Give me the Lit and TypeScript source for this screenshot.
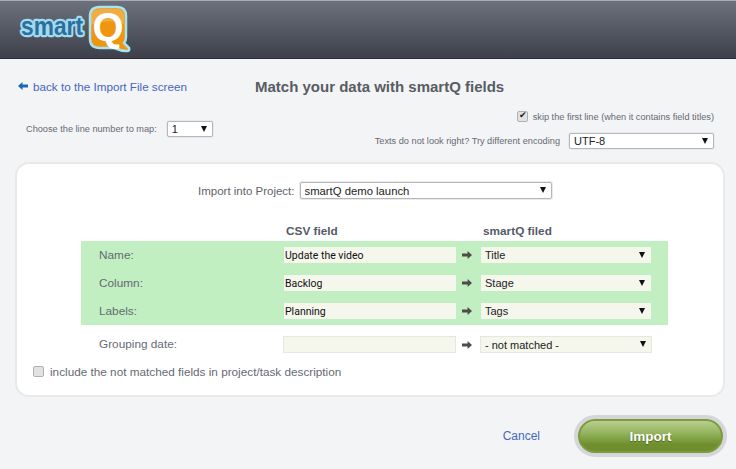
import { LitElement, html, css, svg } from "lit";
import { customElement } from "lit/decorators.js";

const arrow = svg`<svg class="field-arrow" width="10" height="8" viewBox="0 0 10 8"><path d="M0 2.4h5.6V0L10 4 5.6 8V5.6H0z" fill="#4f4b49"/></svg>`;

@customElement("app-root")
export class AppRoot extends LitElement {
  static styles = css`
    :host { display: block; width: 736px; height: 469px; overflow: hidden; background: #f3f4f6; font-family: "Liberation Sans", Arial, sans-serif; color: #666a73; }
    * { box-sizing: border-box; }
    header { height: 59px; padding: 7px 0 0 20px; background: linear-gradient(#6d717b, #3d404a); border-top: 1px solid #a9abb0; border-bottom: 1px solid #2c2e34; }
    header svg { display: block; margin-top: -1px; overflow: visible; }
    .logo-smart { font: bold 25px "Liberation Sans", Arial, sans-serif; fill: #2f6d9e; stroke: #9fdcef; stroke-width: 4.5px; paint-order: stroke; stroke-linejoin: round; }
    .logo-q { font: bold 40px "Liberation Sans", Arial, sans-serif; fill: #fff; }
    .top { display: flex; align-items: center; height: 20px; margin-top: 17px; padding-left: 18px; }
    .back { display: flex; align-items: center; gap: 5px; width: 237px; font-size: 11.7px; color: #4767c0; text-decoration: none; }
    h1 { margin: 0; font-size: 15px; font-weight: bold; color: #585c63; }
    .options { display: flex; justify-content: space-between; align-items: flex-start; padding: 15px 22px 0 26px; height: 66px; }
    .line-map { display: flex; align-items: center; gap: 10px; margin-top: 10px; font-size: 9.2px; }
    .right { display: flex; flex-direction: column; align-items: flex-end; gap: 11px; font-size: 9.2px; }
    .right-row { display: flex; align-items: center; }
    .sel { position: relative; display: block; height: 16px; }
    .sel select { appearance: none; display: block; width: 100%; height: 100%; margin: 0; padding: 0 0 0 4px; border: 1px solid #b4b6b9; border-radius: 2px; background: #fff; color: #222; font: 11px "Liberation Sans", Arial, sans-serif; box-shadow: 0 0 0 1px #e9eaec; }
    .sel::after { content: ""; position: absolute; right: 6px; top: 5px; border-left: 3px solid transparent; border-right: 3px solid transparent; border-top: 6px solid #111; pointer-events: none; }
    .sel-line { width: 46px; }
    .sel-enc { width: 145px; margin-left: 9px; }
    .sel-project { width: 252px; height: 17px; margin-left: 5px; }
    .sel-project select { font-size: 11.3px; }
    .check { appearance: none; display: block; width: 11px; height: 11px; margin: 0 5px 0 0; border: 1px solid #b0b1b3; border-radius: 2px; background: #e2e2e4; position: relative; }
    .check:checked::after { content: "✔"; position: absolute; left: 1px; top: -2px; font-size: 9px; color: #222; }
    .card { margin: 0 11px 0 15px; height: 235px; padding-top: 18px; background: #fff; border: 2px solid #e8e9eb; border-radius: 14px; }
    .project { display: flex; justify-content: flex-start; align-items: center; padding-left: 181px; height: 17px; font-size: 11.5px; color: #5f636b; }
    .heads { display: flex; margin-top: 25px; height: 17px; padding-left: 269px; font-size: 11.8px; font-weight: bold; color: #555a66; }
    .heads span:first-child { width: 197px; }
    .mapped { margin: 0 55px 0 64px; padding: 6px 0; background: #c1efc1; display: flex; flex-direction: column; gap: 12px; }
    .row { display: flex; align-items: center; height: 16px; padding-left: 18px; font-size: 11.8px; color: #666a73; }
    .row .name { width: 185px; margin-top: -1px; }
    .input { display: block; width: 172px; height: 16px; padding: 0 0 0 1px; border: 0; background: #f5f6ec; color: #111; font: 10.5px Roboto, sans-serif; outline: none; }
    .field-arrow { margin: 0 9px 0 6px; flex: none; }
    .sel-field { width: 170px; margin-left: 0; }
    .sel-field select { border: 0; background: #f5f6ec; box-shadow: none; border-radius: 0; }
    .group { margin: 11px 0 0 64px; height: 17px; }
    .group .row { height: 17px; }
    .group .input, .group .sel-field select { border: 1px solid #e6e7e0; }
    .group .input { height: 17px; width: 173px; margin-left: -1px; }
    .group .sel { height: 17px; width: 172px; margin-left: -1px; }
    .include { display: flex; align-items: center; margin: 8px 0 0 16px; font-size: 11.75px; color: #666a73; height: 20px; }
    .include .check { margin-right: 6px; }
    .actions { display: flex; justify-content: flex-end; align-items: center; margin-top: 18px; padding-right: 9px; }
    .cancel { font-size: 12px; color: #4767c0; text-decoration: none; margin-right: 34px; }
    .import { width: 153px; height: 42px; padding: 0; border: 4px solid #d5d6d9; border-radius: 21px; background: linear-gradient(#bdd497 0%, #95b560 40%, #6f8f2e 75%, #6f8f2e 100%); box-shadow: inset 0 0 0 2px #7d9a3c; color: #fff; font: bold 13.5px "Liberation Sans", Arial, sans-serif; text-shadow: 0 1px 1px #4c5f1e; }
  `;

  private field(name: string, value: string, target: string) {
    return html`<div class="row"><span class="name">${name}</span><input class="input" .value=${value} aria-label=${name} />${arrow}<span class="sel sel-field"><select aria-label="smartQ field"><option>${target}</option></select></span></div>`;
  }

  render() {
    return html`
      <header>
        <svg width="115" height="46" viewBox="0 0 115 46" role="img" aria-label="smartQ">
          <text class="logo-smart" x="1" y="27.5" textLength="62" lengthAdjust="spacingAndGlyphs">smart</text>
          <path d="M80 0h17q9 0 9 9v21q0 4-2 6l5 5q1 3-2 3-6 0-13-3H80q-10 0-10-9V9q0-9 10-9z" fill="#ee9610" stroke="#a6e3f3" stroke-width="2.5" stroke-linejoin="round"/>
          <path d="M80 2h17q7 0 7 7v8q-14-6-33 1V9q0-7 9-7z" fill="#fff" opacity=".22"/>
          <text class="logo-q" x="72.5" y="33.5">Q</text>
        </svg>
      </header>
      <div class="top">
        <a class="back" href="#">
          <svg width="10" height="8" viewBox="0 0 10 8"><path d="M4.5 0v2.5H10v3H4.5V8L0 4z" fill="#1668b8"/></svg>
          back to the Import File screen
        </a>
        <h1>Match your data with smartQ fields</h1>
      </div>
      <div class="options">
        <div class="line-map">Choose the line number to map:
          <span class="sel sel-line"><select aria-label="Line number"><option>1</option></select></span>
        </div>
        <div class="right">
          <label class="right-row"><input class="check" type="checkbox" checked />skip the first line (when it contains field titles)</label>
          <div class="right-row">Texts do not look right? Try different encoding
            <span class="sel sel-enc"><select aria-label="Encoding"><option>UTF-8</option></select></span>
          </div>
        </div>
      </div>
      <section class="card">
        <div class="project">Import into Project:
          <span class="sel sel-project"><select aria-label="Project"><option>smartQ demo launch</option></select></span>
        </div>
        <div class="heads"><span>CSV field</span><span>smartQ filed</span></div>
        <div class="mapped">
          ${this.field("Name:", "Update the video", "Title")}
          ${this.field("Column:", "Backlog", "Stage")}
          ${this.field("Labels:", "Planning", "Tags")}
        </div>
        <div class="group">${this.field("Grouping date:", "", "- not matched -")}</div>
        <label class="include"><input class="check" type="checkbox" />include the not matched fields in project/task description</label>
      </section>
      <div class="actions">
        <a class="cancel" href="#">Cancel</a>
        <button class="import">Import</button>
      </div>
    `;
  }
}
